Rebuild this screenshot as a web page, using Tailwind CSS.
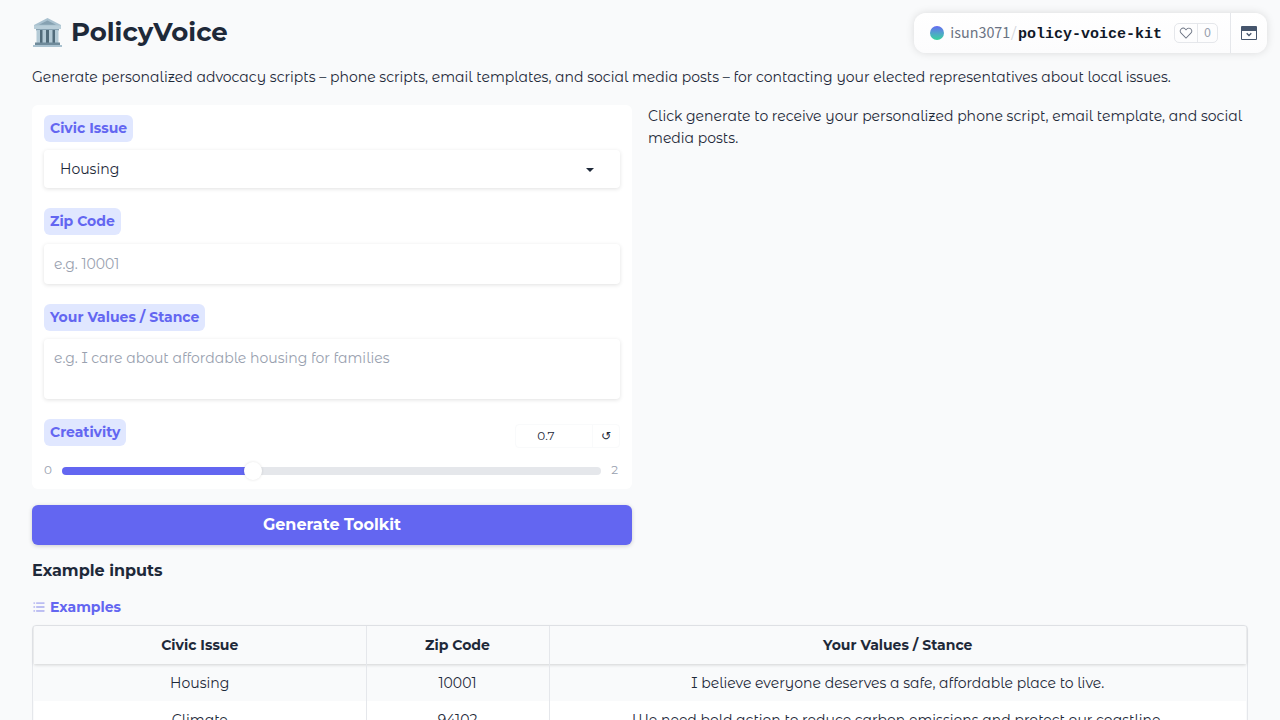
<!DOCTYPE html>
<html lang="en">

<head>
    <meta charset="UTF-8">
    <meta name="viewport" content="width=device-width, initial-scale=1.0">
    <script src="https://cdn.jsdelivr.net/npm/@tailwindcss/browser@4"></script>
    <title>PolicyVoice</title>
</head>

<body class="min-h-screen bg-[#f9fafb] font-['Montserrat_Alternates',Montserrat,Inter,sans-serif] text-sm leading-[22px] text-gray-800">

    <!-- Space header -->
    <div class="absolute top-[13px] right-[13px] z-10 flex h-10 items-stretch rounded-xl bg-linear-to-b from-white to-[#fcfcfd] shadow-[0_0_8px_rgba(0,0,0,0.13)]">
        <div class="flex items-center pr-3 pl-4">
            <span class="mr-[6px] size-[14px] rounded-full bg-linear-to-b from-[#6366f1] to-[#34d399]"></span>
            <div class="flex items-baseline">
                <a href="#" class="font-['Source_Sans_Pro','Source_Sans_3','Noto_Sans',sans-serif] text-base text-gray-500">isun3071</a>
                <span class="mr-[2px] ml-px text-gray-300">/</span>
                <a href="#" class="font-['Liberation_Mono',monospace] text-[15px] font-bold text-gray-900">policy-voice-kit</a>
            </div>
            <div class="ml-3 flex h-5 items-stretch rounded-[5px] border border-gray-200 text-gray-400">
                <button type="button" aria-label="Like" class="flex w-[22px] items-center justify-center">
                    <svg class="size-[14px] text-gray-500" viewBox="0 0 32 32" fill="currentColor">
                        <path d="M22.45 6a5.47 5.47 0 0 1 3.91 1.64 5.7 5.7 0 0 1 0 8L16 26.13 5.64 15.64a5.7 5.7 0 0 1 0-8 5.48 5.48 0 0 1 7.82 0L16 10.24l2.53-2.58A5.44 5.44 0 0 1 22.45 6m0-2a7.47 7.47 0 0 0-5.34 2.24L16 7.36l-1.11-1.12a7.49 7.49 0 0 0-10.68 0 7.72 7.72 0 0 0 0 10.82L16 29l11.79-11.94a7.72 7.72 0 0 0 0-10.82A7.49 7.49 0 0 0 22.45 4Z" />
                    </svg>
                </button>
                <button type="button" class="flex w-5 items-center justify-center border-l border-gray-200 font-['Source_Sans_Pro','Source_Sans_3','Noto_Sans',sans-serif] text-sm">0</button>
            </div>
        </div>
        <button type="button" aria-label="Collapse" class="flex w-[37px] items-center justify-center border-l border-gray-200">
            <svg class="h-[14px] w-4 text-slate-600" viewBox="0 0 16 14" fill="currentColor">
                <path fill-rule="evenodd" d="M1 0h14a1 1 0 0 1 1 1v12a1 1 0 0 1-1 1H1a1 1 0 0 1-1-1V1a1 1 0 0 1 1-1Zm0 5v8h14V5Z" />
                <path d="m5.7 7.3 2.3 2.200 2.300-2.200" fill="none" stroke="currentColor" stroke-width="1.3" />
            </svg>
        </button>
    </div>

    <main class="px-8 pt-4 pb-8">
        <h1 class="flex h-8 items-center gap-2 font-[Montserrat,Inter,sans-serif] text-[26px] leading-8 font-bold">
            <svg class="size-[31px]" viewBox="0 0 31 31">
                <path d="M15.5 1 29 8v1H2V8Z" fill="#a9c1cf" />
                <path d="M15.5 3.500 24 7.800H7Z" fill="#86a1b1" />
                <path d="M2 8.500h27V12H2Z" fill="#b9ced9" />
                <path d="M4 12h23v1.500H4Z" fill="#86a1b1" />
                <path d="M5 13h21v13H5Z" fill="#516b7a" />
                <path d="M4.500 13h3.500v13H4.500ZM10.500 13h3.500v13h-3.500ZM17 13h3.500v13H17ZM23 13h3.500v13H23Z" fill="#b4cad6" />
                <path d="M3 25.500h25V28H3Z" fill="#6f8a9a" />
                <path d="M1 28h29v2H1Z" fill="#a9c1cf" />
            </svg>
            PolicyVoice
        </h1>
        <p class="mt-[18px]">Generate personalized advocacy scripts – phone scripts, email templates, and social media posts – for contacting your elected representatives about local issues.</p>

        <div class="mt-[17px] grid grid-cols-2 gap-4">
            <form class="flex flex-col gap-4">
                <div class="flex flex-col gap-5 rounded-md bg-white px-3 py-[10px]">
                    <div>
                        <label for="issue" class="block w-fit rounded-md bg-[#e0e7ff] px-[6px] py-[3px] font-[Montserrat,Inter,sans-serif] leading-[21px] font-bold text-[#6366f1]">Civic Issue</label>
                        <div class="relative mt-2">
                            <select id="issue" class="block h-[38px] w-full appearance-none rounded-sm bg-white px-4 shadow-[0_1px_4px_rgba(0,0,0,0.12)]">
                                <option>Housing</option>
                                <option>Climate</option>
                            </select>
                            <svg class="pointer-events-none absolute top-[18px] right-[26px] h-1 w-2" viewBox="0 0 8 4" fill="currentColor">
                                <path d="M0 0h8L4 4Z" />
                            </svg>
                        </div>
                    </div>
                    <div>
                        <label for="zip" class="block w-fit rounded-md bg-[#e0e7ff] px-[6px] py-[3px] font-[Montserrat,Inter,sans-serif] leading-[21px] font-bold text-[#6366f1]">Zip Code</label>
                        <input id="zip" type="text" placeholder="e.g. 10001" class="mt-[9px] block h-10 w-full rounded-sm bg-white px-[10px] shadow-[0_1px_4px_rgba(0,0,0,0.12)] placeholder:text-gray-400">
                    </div>
                    <div>
                        <label for="stance" class="block w-fit rounded-md bg-[#e0e7ff] px-[6px] py-[3px] font-[Montserrat,Inter,sans-serif] leading-[21px] font-bold text-[#6366f1]">Your Values / Stance</label>
                        <textarea id="stance" placeholder="e.g. I care about affordable housing for families" class="mt-2 block h-[60px] w-full resize-none rounded-sm bg-white px-[10px] py-2 shadow-[0_1px_4px_rgba(0,0,0,0.12)] placeholder:text-gray-400"></textarea>
                    </div>
                    <div>
                        <div class="flex items-start justify-between">
                            <label for="creativity" class="block w-fit rounded-md bg-[#e0e7ff] px-[6px] py-[3px] font-[Montserrat,Inter,sans-serif] leading-[21px] font-bold text-[#6366f1]">Creativity</label>
                            <div class="mt-[5px] flex h-6 rounded-sm border border-gray-50 text-xs">
                                <input type="text" inputmode="decimal" value="0.7" aria-label="Creativity value" class="w-[76px] pr-4 text-center">
                                <button type="button" aria-label="Reset" class="w-[27px] border-l border-gray-50 font-['DejaVu_Sans']">↺</button>
                            </div>
                        </div>
                        <div class="mt-[13px] flex items-center gap-[10px] pr-[2px] text-xs leading-[18px] text-gray-400">
                            <span>0</span>
                            <input id="creativity" type="range" min="0" max="2" step="0.1" value="0.7" style="background-image: linear-gradient(to right, #6366f1 35%, #e5e7eb 35%)" class="mt-[2px] h-2 min-w-0 grow appearance-none rounded-full [&::-webkit-slider-thumb]:size-[18px] [&::-webkit-slider-thumb]:appearance-none [&::-webkit-slider-thumb]:rounded-full [&::-webkit-slider-thumb]:bg-white [&::-webkit-slider-thumb]:shadow-[0_0_3px_rgba(0,0,0,0.12)]">
                            <span>2</span>
                        </div>
                    </div>
                </div>
                <button type="button" class="h-10 rounded-md bg-[#6366f1] font-[Montserrat,Inter,sans-serif] text-base font-bold text-white shadow-[0_1px_4px_rgba(0,0,0,0.18)]">Generate Toolkit</button>
            </form>
            <p>Click generate to receive your personalized phone script, email template, and social media posts.</p>
        </div>

        <h3 class="mt-[14px] font-[Montserrat,Inter,sans-serif] text-base leading-6 font-bold">Example inputs</h3>

        <!-- Examples -->
        <div class="mt-[13px] flex items-center gap-1 font-[Montserrat,Inter,sans-serif] font-bold text-[#6366f1]">
            <svg class="size-[14px]" viewBox="0 0 32 32" fill="#a5a7f0">
                <path d="M10 6h18v2H10zM10 24h18v2H10zM10 15h18v2H10zM4 15h2v2H4zM4 6h2v2H4zM4 24h2v2H4z" stroke="#a5a7f0" />
            </svg>
            Examples
        </div>
        <div class="mt-[7px] rounded-sm border border-gray-200 px-px">
            <table class="w-full table-fixed text-center">
                <thead>
                    <tr class="h-[38px] font-[Montserrat,Inter,sans-serif] shadow-[0_1px_3px_rgba(0,0,0,0.16)]">
                        <th class="w-[332px] border-r border-gray-200 font-bold">Civic Issue</th>
                        <th class="w-[183px] border-r border-gray-200 font-bold">Zip Code</th>
                        <th class="font-bold">Your Values / Stance</th>
                    </tr>
                </thead>
                <tbody>
                    <tr class="h-[37px]">
                        <td class="border-r border-gray-200">Housing</td>
                        <td class="border-r border-gray-200">10001</td>
                        <td>I believe everyone deserves a safe, affordable place to live.</td>
                    </tr>
                    <tr class="h-[37px] bg-white">
                        <td class="border-r border-gray-200">Climate</td>
                        <td class="border-r border-gray-200">94102</td>
                        <td>We need bold action to reduce carbon emissions and protect our coastline.</td>
                    </tr>
                </tbody>
            </table>
        </div>
    </main>

</body>

</html>
